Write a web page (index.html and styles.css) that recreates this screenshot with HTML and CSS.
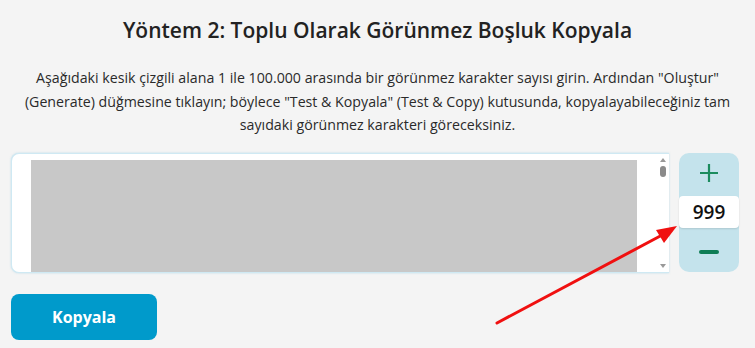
FILE: index.html
```html
<!DOCTYPE html>
<html lang="tr">
<head>
    <meta charset="UTF-8">
    <meta name="viewport" content="width=device-width, initial-scale=1.0">
    <title>Toplu Görünmez Boşluk</title>
    <link rel="stylesheet" href="styles.css">
</head>
<body>
    <div class="method">
        <h2 class="method-title">Yöntem 2: Toplu Olarak Görünmez Boşluk Kopyala</h2>
        <p class="method-desc">Aşağıdaki kesik çizgili alana 1 ile 100.000 arasında bir görünmez karakter sayısı girin. Ardından "Oluştur" (Generate) düğmesine tıklayın; böylece "Test &amp; Kopyala" (Test &amp; Copy) kutusunda, kopyalayabileceğiniz tam sayıdaki görünmez karakteri göreceksiniz.</p>

        <div class="generator">
            <div class="output-box">
                <div class="output-fill"></div>
                <div class="fake-scroll">
                    <span class="scroll-up"></span>
                    <span class="scroll-thumb"></span>
                    <span class="scroll-down"></span>
                </div>
            </div>
            <div class="counter">
                <button class="counter-btn plus">
                    <svg width="20" height="20" viewBox="0 0 20 20"><path d="M10 1v18M1 10h18" stroke="#1b8c5e" stroke-width="2.2"/></svg>
                </button>
                <div class="counter-value">999</div>
                <button class="counter-btn minus">
                    <svg width="20" height="6" viewBox="0 0 20 6"><rect x="0" y="1" width="20" height="4" rx="2" fill="#0f7d55"/></svg>
                </button>
            </div>
        </div>

        <button class="copy-btn">Kopyala</button>

        <!-- annotation arrow -->
        <svg class="pointer" width="755" height="348" viewBox="0 0 755 348">
            <line x1="497" y1="323" x2="664" y2="234" stroke="#f01010" stroke-width="3" stroke-linecap="round"/>
            <polygon points="677,226 656,230 664,243" fill="#f01010"/>
        </svg>
    </div>
</body>
</html>
```

FILE: styles.css
```css
body {
    margin: 0;
    background-color: #f4f4f4;
    font-family: "Open Sans", "Noto Sans", sans-serif;
    color: #222;
}

.method {
    position: relative;
    height: 348px;
    padding: 13px 11px 0 11px;
    box-sizing: border-box;
    overflow: hidden;
}

.method-title {
    margin: 0;
    text-align: center;
    font-size: 21px;
    font-weight: 600;
    line-height: 34px;
    color: #222;
}

.method-desc {
    margin: 19px 0 0 0;
    padding: 0;
    text-align: center;
    font-size: 14.2px;
    line-height: 23.5px;
    color: #2a2a2a;
}

.generator {
    display: flex;
    gap: 10px;
    margin-top: 16px;
}

.output-box {
    position: relative;
    width: 658px;
    height: 120px;
    box-sizing: border-box;
    background-color: #fff;
    border: 1px solid #cfe9f3;
    border-right: none;
    border-radius: 8px 0 0 8px;
    box-shadow: 0 0 2px rgba(120, 190, 220, 0.5);
    padding: 6px 32px 0 19px;
    overflow: hidden;
    display: flex;
}

.output-fill {
    flex-grow: 1;
    background-color: #c8c8c8;
    height: 140px;
}

.fake-scroll {
    position: absolute;
    top: 0;
    right: 0;
    width: 12px;
    height: 100%;
    background-color: #fff;
}

.scroll-up,
.scroll-down {
    position: absolute;
    left: 3px;
    width: 0;
    height: 0;
    border-left: 3px solid transparent;
    border-right: 3px solid transparent;
}

.scroll-up {
    top: 4px;
    border-bottom: 4px solid #999;
}

.scroll-down {
    bottom: 4px;
    border-top: 4px solid #999;
}

.scroll-thumb {
    position: absolute;
    top: 12px;
    left: 3px;
    width: 6px;
    height: 11px;
    border-radius: 3px;
    background-color: #8a8a8a;
}

.counter {
    width: 60px;
    height: 119px;
    background-color: #c4e3ec;
    border-radius: 10px;
    display: flex;
    flex-direction: column;
    align-items: center;
    justify-content: space-between;
}

.counter-btn {
    border: none;
    background: none;
    padding: 0;
    height: 40px;
    width: 100%;
    display: flex;
    align-items: center;
    justify-content: center;
    cursor: pointer;
}

.counter-value {
    width: 100%;
    height: 32px;
    background-color: #fff;
    border-radius: 4px;
    box-shadow: 0 1px 2px rgba(0, 0, 0, 0.12);
    display: flex;
    align-items: center;
    justify-content: center;
    font-size: 19px;
    font-weight: 600;
    color: #111;
}

.copy-btn {
    display: block;
    margin-top: 21px;
    width: 146px;
    height: 46px;
    border: none;
    border-radius: 8px;
    background-color: #009acb;
    color: #fff;
    font-family: "Open Sans", "Noto Sans", sans-serif;
    font-size: 16px;
    font-weight: 700;
    cursor: pointer;
}

.pointer {
    position: absolute;
    top: 0;
    left: 0;
    pointer-events: none;
}
```
